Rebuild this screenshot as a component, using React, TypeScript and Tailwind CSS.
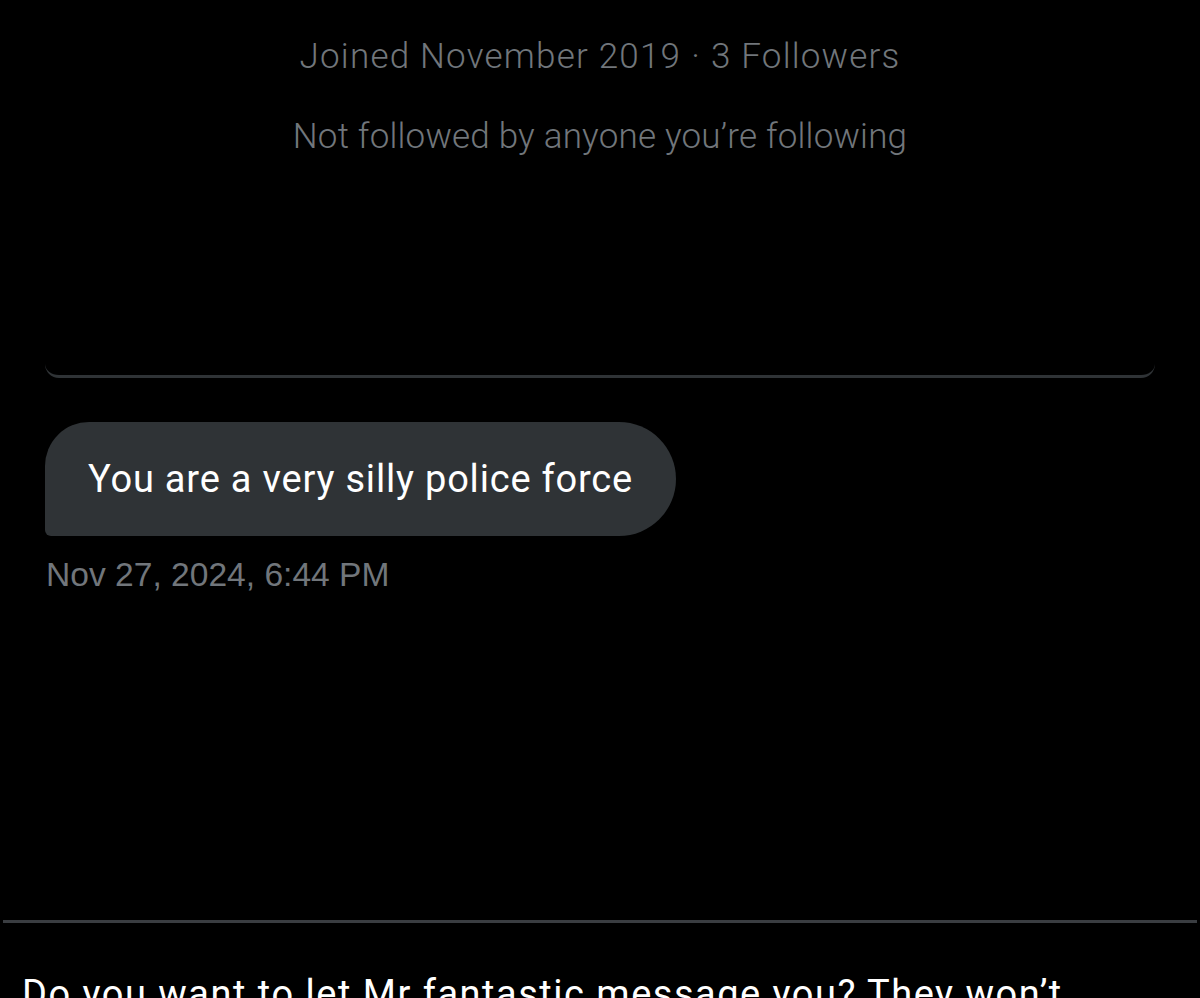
export default function App() {
  return (
    <div className="h-[998px] w-[1200px] overflow-hidden bg-black text-white" style={{ fontFamily: 'Roboto, "Liberation Sans", sans-serif' }}>
      {/* Profile info */}
      <div className="mx-[45px] h-[378px] rounded-b-[14px] border-b-[3px] border-[#2f3336] pt-[35px] text-center font-light text-[#71767b]">
        <p className="text-[35px] leading-[44px] tracking-[1.2px]">
          Joined November 2019<span className="mx-[10px]">·</span>3 Followers
        </p>
        <p className="mt-[36px] text-[35px] leading-[44px] tracking-[0.2px]">Not followed by anyone you’re following</p>
      </div>

      {/* Message */}
      <div className="px-[45px] pt-[44px]">
        <div className="inline-flex h-[114px] items-center rounded-tl-[44px] rounded-bl-[6px] rounded-r-[57px] bg-[#2f3336] pl-[43px] pr-[43px]">
          <span className="text-[38px] tracking-[0.8px] text-white">You are a very silly police force</span>
        </div>
        <p className="mt-[20px] pl-[1px] text-[33.6px] leading-[38px] text-[#71767b]" style={{ fontFamily: '"Liberation Sans", Arial, sans-serif' }}>
          Nov 27, 2024, 6:44 PM
        </p>
      </div>

      {/* Request prompt */}
      <div className="mt-[326px] mx-[3px] border-t-[3px] border-[#3a3d41]" />
      <p className="mt-[48px] w-[1130px] px-[22px] text-[38px] leading-[46px] tracking-[1.5px] text-white">
        Do you want to let Mr fantastic message you? They won’t know you’ve seen their message until you accept.
      </p>
    </div>
  );
}
